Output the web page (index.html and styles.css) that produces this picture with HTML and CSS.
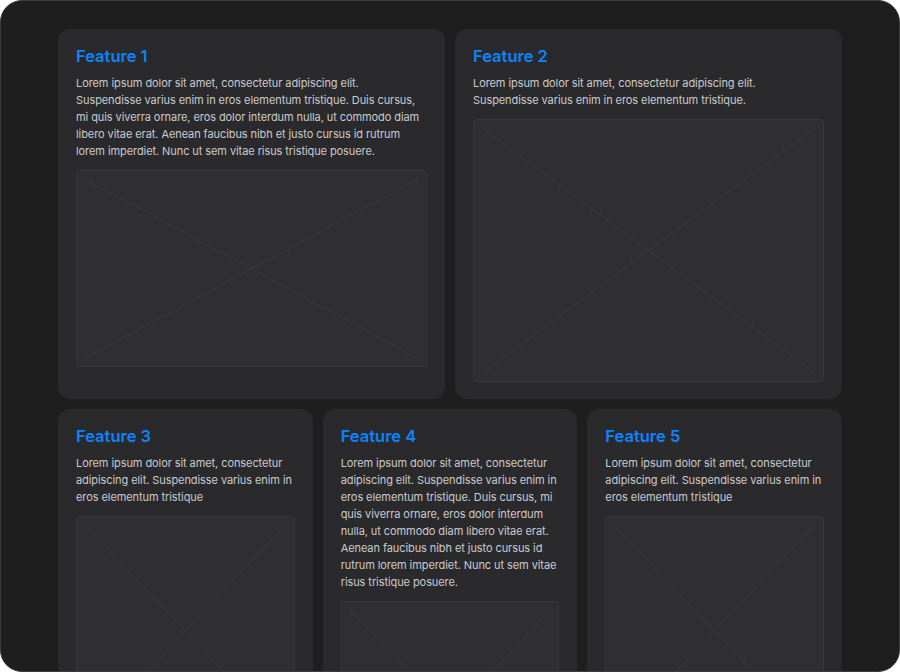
FILE: index.html
```html
<!DOCTYPE html>
<html>
<head>
<meta charset="utf-8">
<link rel="stylesheet" href="styles.css">
</head>
<body>
<div class="frame">
  <div class="container">
    <div class="row row-two">
      <div class="card">
        <h2 class="title">Feature 1</h2>
        <p class="text">Lorem ipsum dolor sit amet, consectetur adipiscing elit. Suspendisse varius enim in eros elementum tristique. Duis cursus, mi quis viverra ornare, eros dolor interdum nulla, ut commodo diam libero vitae erat. Aenean faucibus nibh et justo cursus id rutrum lorem imperdiet. Nunc ut sem vitae risus tristique posuere.</p>
        <div class="ph ph-wide"><svg viewBox="0 0 100 100" preserveAspectRatio="none"><line x1="0" y1="0" x2="100" y2="100"/><line x1="100" y1="0" x2="0" y2="100"/></svg></div>
      </div>
      <div class="card">
        <h2 class="title">Feature 2</h2>
        <p class="text">Lorem ipsum dolor sit amet, consectetur adipiscing elit. Suspendisse varius enim in eros elementum tristique.</p>
        <div class="ph ph-std"><svg viewBox="0 0 100 100" preserveAspectRatio="none"><line x1="0" y1="0" x2="100" y2="100"/><line x1="100" y1="0" x2="0" y2="100"/></svg></div>
      </div>
    </div>
    <div class="row row-three">
      <div class="card">
        <h2 class="title">Feature 3</h2>
        <p class="text">Lorem ipsum dolor sit amet, consectetur adipiscing elit. Suspendisse varius enim in eros elementum tristique</p>
        <div class="ph ph-tall"><svg viewBox="0 0 100 100" preserveAspectRatio="none"><line x1="0" y1="0" x2="100" y2="100"/><line x1="100" y1="0" x2="0" y2="100"/></svg></div>
      </div>
      <div class="card">
        <h2 class="title">Feature 4</h2>
        <p class="text">Lorem ipsum dolor sit amet, consectetur adipiscing elit. Suspendisse varius enim in eros elementum tristique. Duis cursus, mi quis viverra ornare, eros dolor interdum nulla, ut commodo diam libero vitae erat. Aenean faucibus nibh et justo cursus id rutrum lorem imperdiet. Nunc ut sem vitae risus tristique posuere.</p>
        <div class="ph ph-tall"><svg viewBox="0 0 100 100" preserveAspectRatio="none"><line x1="0" y1="0" x2="100" y2="100"/><line x1="100" y1="0" x2="0" y2="100"/></svg></div>
      </div>
      <div class="card">
        <h2 class="title">Feature 5</h2>
        <p class="text">Lorem ipsum dolor sit amet, consectetur adipiscing elit. Suspendisse varius enim in eros elementum tristique</p>
        <div class="ph ph-tall"><svg viewBox="0 0 100 100" preserveAspectRatio="none"><line x1="0" y1="0" x2="100" y2="100"/><line x1="100" y1="0" x2="0" y2="100"/></svg></div>
      </div>
    </div>
  </div>
</div>
</body>
</html>
```

FILE: styles.css
```css
html, body {
  margin: 0;
  padding: 0;
  background: #ffffff;
}
body {
  font-family: Inter, "Noto Sans", sans-serif;
}
.frame {
  box-sizing: border-box;
  width: 900px;
  height: 672px;
  background: #1e1e1f;
  border: 1px solid #3c3c3d;
  border-radius: 22px;
  overflow: hidden;
}
.container {
  width: 784px;
  margin: 0 auto;
  padding-top: 28px;
  display: flex;
  flex-direction: column;
  gap: 10px;
}
.row {
  display: grid;
  gap: 10px;
  align-items: stretch;
}
.row-two {
  grid-template-columns: 1fr 1fr;
}
.row-three {
  grid-template-columns: 1fr 1fr 1fr;
}
.card {
  background: #2a2a2c;
  border-radius: 12px;
  padding: 16px 18px 17px;
  display: flex;
  flex-direction: column;
  align-items: stretch;
}
.title {
  margin: 0;
  font-size: 16.5px;
  line-height: 22px;
  font-weight: 600;
  color: #0a84ff;
}
.text {
  margin: 8px 0 10px;
  font-size: 11px;
  line-height: 17px;
  letter-spacing: -0.08px;
  color: #cbcbce;
}
.ph {
  position: relative;
  box-sizing: border-box;
  width: 100%;
  flex: none;
  background: #2f2f31;
  border: 1px solid #38383a;
  border-radius: 4px;
}
.ph-wide { aspect-ratio: 16 / 9; }
.ph-std { aspect-ratio: 4 / 3; }
.ph-tall { aspect-ratio: 1 / 1.05; }
.ph svg {
  position: absolute;
  top: 8px;
  left: 8px;
  width: calc(100% - 16px);
  height: calc(100% - 16px);
}
.ph line {
  stroke: #3a3a3c;
  stroke-width: 1;
  vector-effect: non-scaling-stroke;
}
```
